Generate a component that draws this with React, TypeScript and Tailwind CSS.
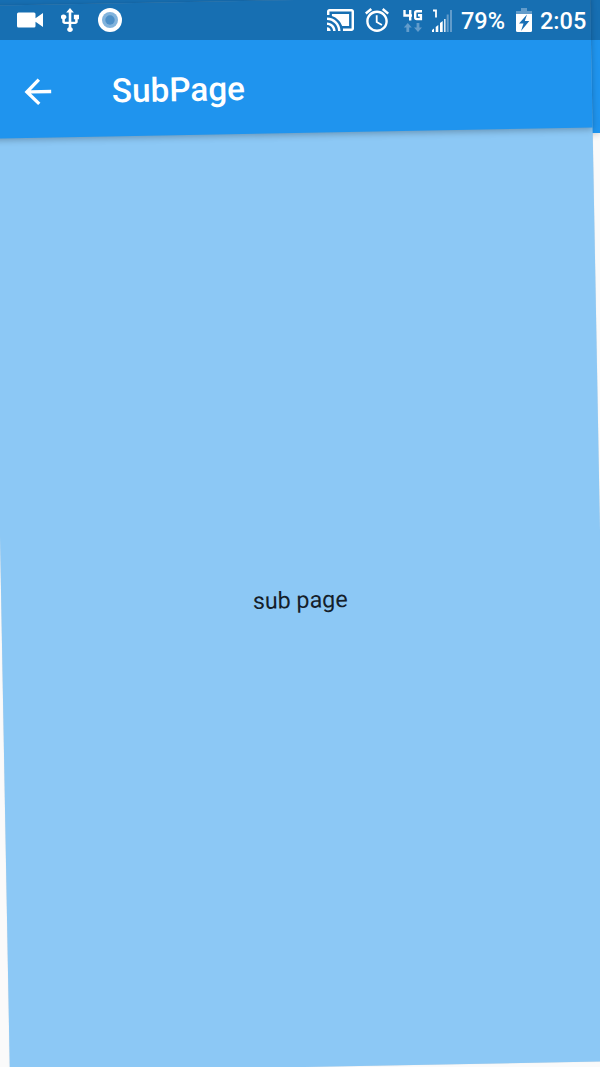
import React from "react";

function StatusBar() {
  return (
    <div className="relative z-20 flex h-10 w-[600px] items-center bg-black/25 text-white">
      <svg className="ml-[17px] h-[16px] w-[26px] shrink-0" viewBox="0 0 26 16" fill="currentColor">
        <path d="M1.5 0.5H17a1.5 1.5 0 0 1 1.5 1.5v4.3L26 1v14l-7.5-5.3V14a1.5 1.5 0 0 1-1.5 1.5H1.5A1.5 1.5 0 0 1 0 14V2A1.5 1.5 0 0 1 1.5 .5z" />
      </svg>
      <svg className="ml-[18px] h-[25px] w-[18px] shrink-0" viewBox="5 1 14 22" preserveAspectRatio="none" fill="currentColor">
        <path d="M15 7v4h1v2h-3V5h2l-3-4-3 4h2v8H8v-2.07c.7-.37 1.2-1.08 1.2-1.93 0-1.21-.99-2.2-2.2-2.2-1.21 0-2.2.99-2.2 2.2 0 .85.5 1.56 1.2 1.93V13c0 1.11.89 2 2 2h3v3.05c-.71.37-1.2 1.1-1.2 1.95 0 1.22.99 2.2 2.2 2.2 1.21 0 2.2-.98 2.2-2.2 0-.85-.49-1.58-1.2-1.95V15h3c1.11 0 2-.89 2-2v-2h1V7h-4z" />
      </svg>
      <svg className="ml-[19px] h-[24px] w-[24px] shrink-0" viewBox="0 0 24 24">
        <circle cx="12" cy="12" r="12" fill="#fff" />
        <circle cx="12" cy="12" r="8" fill="#81b3dc" />
        <circle cx="12" cy="12" r="4.7" fill="#4c8fc7" />
      </svg>
      <svg className="ml-[205px] h-[22px] w-[27px] shrink-0" viewBox="1 3 22 18" preserveAspectRatio="none" fill="currentColor">
        <path d="M1 18v3h3c0-1.66-1.34-3-3-3zm0-4v2c2.76 0 5 2.24 5 5h2c0-3.87-3.13-7-7-7zm18-7H5v1.63c3.96 1.28 7.09 4.41 8.37 8.37H19V7zM1 10v2c4.97 0 9 4.03 9 9h2c0-6.08-4.93-11-11-11zm20-7H3c-1.1 0-2 .9-2 2v3h2V5h18v14h-7v2h7c1.1 0 2-.9 2-2V5c0-1.1-.9-2-2-2z" />
      </svg>
      <svg className="ml-[11px] h-[24px] w-[24px] shrink-0" viewBox="2 1.8 20 20.3" preserveAspectRatio="none" fill="currentColor">
        <path d="M22 5.72l-4.6-3.86-1.29 1.53 4.6 3.86L22 5.72zM7.88 3.39L6.6 1.86 2 5.71l1.29 1.53 4.59-3.85zM12.5 8H11v6l4.75 2.85.75-1.23-4-2.37V8zM12 4c-4.97 0-9 4.03-9 9s4.02 9 9 9a9 9 0 0 0 0-18zm0 16c-3.87 0-7-3.13-7-7s3.13-7 7-7 7 3.13 7 7-3.13 7-7 7z" />
      </svg>
      <svg className="ml-[14px] h-[24px] w-[20px] shrink-0" viewBox="0 0 20 24" fill="none">
        <path d="M1.5 2v5.5H9M7.2 2v10.5M19 3.2h-5.3q-1.5 0-1.5 1.5v4.9q0 1.5 1.5 1.5h4.2V7.3H15" stroke="#fff" strokeWidth="2.4" />
        <path d="M4.8 15l4 4.5H6.2V24H3.4v-4.5H.8zM15 24l4-4.5h-2.6V15h-2.8v4.5H11z" fill="#629ccb" />
      </svg>
      <svg className="ml-[9px] h-[23px] w-[20px] shrink-0" viewBox="0 0 20 23" fill="none">
        <path d="M1 1.5h3v7" stroke="#fff" strokeWidth="1.8" />
        <path d="M0 23v-2l2-1.5V23zM3.7 23v-5l2.6-2v7zM8 23v-9l2.7-2v11z" fill="#fff" />
        <path d="M12 23V10h1.6v13z" fill="#d6e5f2" />
        <path d="M14.7 23V5.5h2V23zM18 23V1h2v22z" fill="#629ccb" />
      </svg>
      <span className="ml-[9px] mt-[3px] w-[45px] whitespace-nowrap text-[23.5px] leading-none font-medium">79%</span>
      <svg className="ml-[10px] h-[24px] w-[16px] shrink-0" viewBox="0 0 16 24">
        <path d="M5 0h6v3h5v4H0V3h5z" fill="#629ccb" />
        <path d="M0 6h16v16.5q0 1.5-1.5 1.5h-13Q0 24 0 22.5z" fill="#fff" />
        <path d="M11 6.5l-8 9h4.5L5 23l8.3-10H8.8z" fill="#196fb5" />
      </svg>
      <span className="ml-[8px] mt-[3px] whitespace-nowrap text-[23.5px] leading-none font-medium">2:05</span>
    </div>
  );
}

function SubPage() {
  return (
    <div className="absolute top-0 left-0 flex h-[1067px] w-[600px] -rotate-[1.05deg] flex-col bg-[#8cc8f5] shadow-[0_0_1px_rgba(0,0,0,0.12)]">
      <header className="relative flex h-[133px] shrink-0 items-center bg-[#1f94ee] pt-10 text-white shadow-[0_2px_6px_rgba(0,0,0,0.25)]">
        <svg className="ml-[26px] h-10 w-10" viewBox="0 0 24 24" fill="currentColor">
          <path d="M20 11H7.83l5.59-5.59L12 4l-8 8 8 8 1.41-1.41L7.83 13H20v-2z" />
        </svg>
        <h1 className="ml-[54px] pt-[3px] text-[33.3px] leading-none font-medium">SubPage</h1>
      </header>
      <main className="flex grow items-center justify-center pr-[2px] pt-px text-[23.3px] text-[#14202a]">
        <p>sub page</p>
      </main>
    </div>
  );
}

export default function App() {
  return (
    <div className="relative h-[1067px] w-[600px] overflow-hidden bg-[#fafafa] font-['Roboto',sans-serif]">
      <div className="absolute inset-x-0 top-0 h-[133px] bg-[#1f94ee] shadow-[0_2px_6px_rgba(0,0,0,0.15)]" />
      <SubPage />
      <StatusBar />
    </div>
  );
}
